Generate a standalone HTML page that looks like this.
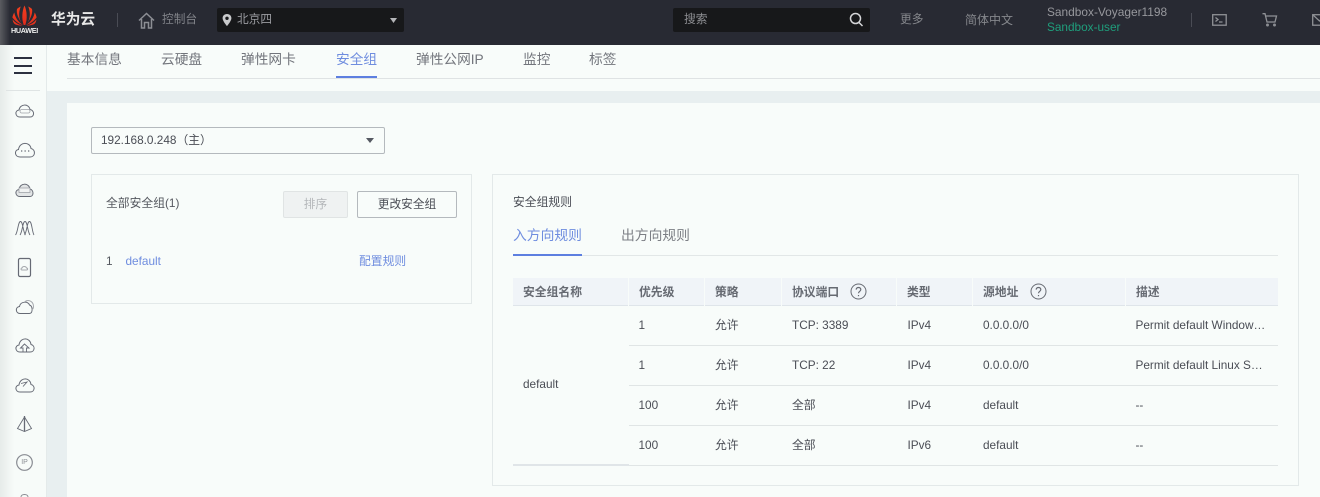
<!DOCTYPE html>
<html lang="zh"><head><meta charset="utf-8"><title>安全组</title>
<style>
html,body{margin:0;padding:0}
body{width:1320px;height:497px;overflow:hidden;position:relative;background:#f8fcfa;font-family:"Liberation Sans","Noto Sans CJK SC",sans-serif;color:#4a4d55;font-size:11.7px}
#w{position:absolute;left:0;top:0;width:1320px;height:497px;overflow:hidden;filter:blur(.3px)}
.a{position:absolute;white-space:nowrap}
.t{line-height:16px}
.l{font-size:11.8px}
.n{font-size:13.7px;line-height:18px;color:#72757c;top:51px}
svg{position:absolute;overflow:visible}
.box{position:absolute;box-sizing:border-box;border:1px solid #e3e9e9}
.th{position:absolute;top:278px;background:#f0f4f8;border-bottom:1px solid #dfe5ea;font-weight:bold;font-size:11.800px;color:#666a72;line-height:28px;padding-left:10px;box-sizing:border-box;height:28px;white-space:nowrap}
.hl{position:absolute;height:1px;background:#e0e5e5}
</style></head><body><div id="w">
<!-- top bar -->
<div class="a" style="left:0;top:0;width:1320px;height:45px;background:#282a33"></div>
<div class="a" style="left:0;top:0;width:10px;height:45px;background:linear-gradient(90deg,#5a5b60,#282a33)"></div>
<svg style="left:11px;top:5px" width="27" height="22" viewBox="0 0 27 22">
<defs><linearGradient id="r" x1="0" y1="0" x2="0" y2="1"><stop offset="0" stop-color="#f0401f"/><stop offset="1" stop-color="#e02a1c"/></linearGradient></defs>
<g fill="url(#r)">
<path d="M12.600 20C7 15 7.500 7 9.800 1.500C8.400 2 7 3 6 4C5 8 7.500 15 12.600 20Z"/>
<path d="M14.400 20C20 15 19.500 7 17.200 1.500C18.600 2 20 3 21 4C22 8 19.500 15 14.400 20Z"/>
<path d="M12.700 20C10.500 14 11 6 13.500 .5C16 6 16.500 14 14.300 20Z"/>
<path d="M12 20C7 17 4 12 3.300 7.500C2.300 9.200 1.600 11 1.400 12.500C4 16 8 19 12 20Z"/>
<path d="M15 20C20 17 23 12 23.700 7.500C24.700 9.200 25.400 11 25.600 12.500C23 16 19 19 15 20Z"/>
<path d="M11.500 20.500C7 19.500 3.500 17 1.600 14.500C1.800 16.500 2.600 18 3.600 19C6 20.300 9 20.700 11.500 20.500Z"/>
<path d="M15.500 20.500C20 19.500 23.500 17 25.400 14.500C25.200 16.500 24.400 18 23.400 19C21 20.300 18 20.700 15.500 20.500Z"/>
</g></svg>
<div class="a" style="left:11px;top:26px;width:27px;text-align:center;font-size:7.200px;line-height:9px;color:#eee;letter-spacing:-.3px;font-weight:bold">HUAWEI</div>
<div class="a t" style="left:51px;top:12px;font-size:14.700px;font-weight:bold;color:#e8e8e8">华为云</div>
<div class="a" style="left:117px;top:13px;width:1px;height:14px;background:#4a4c55"></div>
<svg style="left:138px;top:12px" width="17" height="17" viewBox="0 0 17 17" fill="none" stroke="#8c8e94" stroke-width="1.500"><path d="M1 8.500L8.500 1.500L16 8.500M3.500 7V16H6.500V10.500H10.500V16H13.500V7"/></svg>
<div class="a t" style="left:162px;top:12px;color:#82848a">控制台</div>
<div class="a" style="left:217px;top:8px;width:187px;height:24px;background:#17181a;border-radius:2px"></div>
<svg style="left:222px;top:14px" width="10" height="12" viewBox="0 0 10 12"><path fill="#c9cacc" d="M5 0C2.200 0 .6 2 .6 4.200C.6 7 5 12 5 12S9.400 7 9.400 4.200C9.400 2 7.800 0 5 0ZM5 6A1.700 1.700 0 1 1 5 2.600A1.700 1.700 0 0 1 5 6Z"/></svg>
<div class="a t" style="left:237px;top:12px;color:#9a9ba0">北京四</div>
<svg style="left:390px;top:18px" width="7" height="5"><path d="M0 0H7L3.500 5Z" fill="#b4b5b8"/></svg>
<div class="a" style="left:673px;top:8px;width:197px;height:24px;background:#17181a;border-radius:2px"></div>
<div class="a t" style="left:684px;top:12px;color:#8e8f93">搜索</div>
<svg style="left:849px;top:12px" width="15" height="15" viewBox="0 0 15 15" fill="none" stroke="#d5d6d8" stroke-width="1.500"><circle cx="6.500" cy="6.500" r="5"/><path d="M10 10.500L13.500 14"/></svg>
<div class="a t" style="left:900px;top:12px;color:#85878c">更多</div>
<div class="a t" style="left:965px;top:12px;color:#85878c;font-size:12px">简体中文</div>
<div class="a t" style="left:1047px;top:4px;color:#97989d;font-size:11.900px">Sandbox-Voyager1198</div>
<div class="a t" style="left:1047px;top:19px;color:#1f9e7c;font-size:11.800px">Sandbox-user</div>
<div class="a" style="left:1191px;top:13px;width:1px;height:14px;background:#4a4c55"></div>
<svg style="left:1212px;top:14px" width="15" height="12" viewBox="0 0 15 12" fill="none" stroke="#8f9196" stroke-width="1.300"><rect x=".7" y=".7" width="13.500" height="10.500"/><path d="M3.500 3.500L6 5.500L3.500 7.500M7 8H10.500"/></svg>
<svg style="left:1262px;top:13px" width="16" height="14" viewBox="0 0 16 14" fill="none" stroke="#8f9196" stroke-width="1.300"><path d="M.5 .7H3L5 9H13L14.500 3H3.500"/><circle cx="5.500" cy="12" r=".8"/><circle cx="12.500" cy="12" r=".8"/></svg>
<svg style="left:1312px;top:14px" width="15" height="12" viewBox="0 0 15 12" fill="none" stroke="#8f9196" stroke-width="1.300"><rect x=".7" y=".7" width="13.500" height="10.500"/><path d="M.7 .7L7.500 7L14.200 .7"/></svg>

<!-- gray layout -->
<div class="a" style="left:47px;top:91px;width:1273px;height:12px;background:#e8eff0"></div>
<div class="a" style="left:47px;top:91px;width:20px;height:406px;background:#e8eff0"></div>

<!-- sidebar -->
<div class="a" style="left:0;top:45px;width:47px;height:452px;background:linear-gradient(90deg,#e6ebe9 0,#f7fbf9 14px)"></div>
<div class="a" style="left:46px;top:45px;width:1px;height:452px;background:#e4eaea"></div>
<div class="a" style="left:14px;top:57px;width:18px;height:2px;background:#2c3040"></div>
<div class="a" style="left:14px;top:65px;width:18px;height:2px;background:#2c3040"></div>
<div class="a" style="left:14px;top:72px;width:18px;height:2px;background:#2c3040"></div>
<div class="a" style="left:6px;top:90px;width:34px;height:1px;background:#dfe4e4"></div>
<svg style="left:0;top:0" width="47" height="497" viewBox="0 0 47 497" fill="none" stroke="#666a75" stroke-width="1">
<path d="M20 117C15 117 14.500 110.500 19 110C20 103.500 29 103.500 30 109.500C34.500 110 35 117 30 117Z"/><rect x="20" y="109.500" width="10" height="3.500" rx="1.700" stroke="#a0a3a9" stroke-width=".8"/>
<path d="M20 157C14.500 157 14 150 18.500 149.500C19.500 141.500 30 141.500 31 148.500C36 149.500 35.500 157 30 157Z"/><path d="M21 151h1.300M24.500 151h1.300M28 151h1.300" stroke-width="1.300"/>
<path d="M20 196.500C15 196.500 14.500 190 19 189.500C20 182.500 29 182.500 30 189C34 190 34 196.500 30 196.500Z" fill="#e2e5e6"/><rect x="19" y="188" width="11" height="4.500" fill="#f0f2f2" stroke="#a0a3a9" stroke-width=".8"/>
<path d="M15.500 235C18 232 18 221.500 20.500 221.500C23 221.500 23 232 25.500 235M20 235C22.500 232 22.500 221.500 25 221.500C27.500 221.500 27.500 232 30 235M24.500 235C27 232 27 221.500 29.500 221.500C32 221.500 32 232 34 235" stroke-width=".9"/>
<rect x="18.500" y="258.500" width="12" height="18" rx="1.500" stroke-width="1.200"/><path d="M22 270C20.500 270 21 268 22 268C22.500 266 26 266 26.500 268C28 268 28 270 26.500 270Z" stroke="#a5a8ad"/>
<path d="M20 313.500C15.500 313.500 15 307 19.500 306.500C20.500 301 28.500 301 29.500 305C33 306 33 313.500 29.500 313.500Z"/><path d="M25 301.500C28.500 299 33.500 301.500 33.500 306.500C33.500 308 33 309 32 310" stroke="#a5a8ad"/>
<path d="M20 352C15 352 14.500 345.500 19 345C20 337 30 337 31 344.500C35.500 345.500 35 352 30 352Z"/><path d="M24.500 344L20.500 348H23V352H26.500V348H29Z" stroke-width=".9"/>
<path d="M20 392C15 392 14.500 385.500 19 385C20 377 30 377 31 384.500C35.500 385.500 35 392 30 392Z"/><path d="M21 383.500L27 382L23 386.500" stroke-width=".9"/>
<path d="M24.500 416V431" stroke-width="1.300"/><path d="M24.500 417L17.500 428.500L24.500 431.500L31.500 428.500Z" stroke-width=".9"/>
<circle cx="24.500" cy="462.500" r="7.800" stroke="#888b92" stroke-width="1.200"/>
<path d="M21 497C21 495.500 22.500 494.500 24.500 494.500C26.500 494.500 28 495.500 28 497" stroke="#888b92"/>
</svg>
<div class="a" style="left:19px;top:458px;width:11px;text-align:center;font-size:7px;line-height:9px;color:#8b8e94">IP</div>

<!-- tabs -->
<div class="a" style="left:67px;top:78px;width:1253px;height:1px;background:#dfe3e4"></div>
<div class="a" style="left:336px;top:76px;width:41px;height:2px;background:#5d7fe0"></div>
<div class="a n" style="left:67px">基本信息</div>
<div class="a n" style="left:161px">云硬盘</div>
<div class="a n" style="left:241px">弹性网卡</div>
<div class="a n" style="left:336px;color:#6f8ddf">安全组</div>
<div class="a n" style="left:416px">弹性公网IP</div>
<div class="a n" style="left:523px">监控</div>
<div class="a n" style="left:589px">标签</div>

<!-- ip select -->
<div class="a" style="left:91px;top:127px;width:294px;height:27px;box-sizing:border-box;border:1px solid #b4b9bd;border-radius:2px"></div>
<div class="a t" style="left:101px;top:132px;color:#4a4d55;font-size:11.800px">192.168.0.248（主）</div>
<svg style="left:366px;top:138px" width="8" height="5"><path d="M0 0H8L4 5Z" fill="#555962"/></svg>

<!-- left panel -->
<div class="box" style="left:91px;top:174px;width:381px;height:130px"></div>
<div class="a t" style="left:106px;top:195px;color:#55585f;font-size:11.800px">全部安全组(1)</div>
<div class="a" style="left:283px;top:191px;width:65px;height:27px;box-sizing:border-box;background:#eff2f2;border:1px solid #e0e4e4;border-radius:2px;text-align:center;line-height:25px;color:#b3b6b9">排序</div>
<div class="a" style="left:357px;top:191px;width:100px;height:27px;box-sizing:border-box;border:1px solid #b4b9bd;border-radius:2px;text-align:center;line-height:25px;color:#4a4d55">更改安全组</div>
<div class="a t l" style="left:106px;top:253px;color:#55585f">1</div>
<div class="a t l" style="left:125.500px;top:253px;color:#6f8ddf">default</div>
<div class="a t l" style="left:359px;top:253px;color:#6f8ddf">配置规则</div>

<!-- right panel -->
<div class="box" style="left:492px;top:174px;width:807px;height:312px"></div>
<div class="a t l" style="left:513px;top:194px;color:#4a4d55">安全组规则</div>
<div class="a n" style="left:513px;top:227px;font-size:13.800px;color:#6f8ddf">入方向规则</div>
<div class="a n" style="left:621px;top:227px;font-size:13.800px;color:#7c7f85">出方向规则</div>
<div class="a" style="left:513px;top:255px;width:765px;height:1px;background:#e2e7e7"></div>
<div class="a" style="left:513px;top:254px;width:69px;height:2px;background:#5d7fe0"></div>

<!-- table head -->
<div class="th" style="left:513px;width:115px">安全组名称</div>
<div class="th" style="left:629px;width:75px">优先级</div>
<div class="th" style="left:705px;width:76px">策略</div>
<div class="th" style="left:782px;width:114px">协议端口</div>
<div class="th" style="left:897px;width:75px">类型</div>
<div class="th" style="left:973px;width:152px">源地址</div>
<div class="th" style="left:1126px;width:152px">描述</div>
<svg style="left:850px;top:283px" width="17" height="17" viewBox="0 0 17 17" fill="none" stroke="#666a72" stroke-width="1"><circle cx="8.500" cy="8.500" r="7.500"/><path d="M6.200 6.600C6.200 3.800 10.800 3.800 10.800 6.600C10.800 8.300 8.500 8.300 8.500 10.300" stroke-width="1.200"/><path d="M8.500 12V13.200" stroke-width="1.200"/></svg>
<svg style="left:1030px;top:283px" width="17" height="17" viewBox="0 0 17 17" fill="none" stroke="#666a72" stroke-width="1"><circle cx="8.500" cy="8.500" r="7.500"/><path d="M6.200 6.600C6.200 3.800 10.800 3.800 10.800 6.600C10.800 8.300 8.500 8.300 8.500 10.300" stroke-width="1.200"/><path d="M8.500 12V13.200" stroke-width="1.200"/></svg>

<!-- table rows -->
<div class="hl" style="left:629px;top:345px;width:649px"></div>
<div class="hl" style="left:629px;top:385px;width:649px"></div>
<div class="hl" style="left:629px;top:425px;width:649px"></div>
<div class="hl" style="left:629px;top:465px;width:649px"></div>
<div class="a" style="left:513px;top:464px;width:116px;height:2px;background:#e0e5e8"></div>
<div class="a t l" style="left:523px;top:376px">default</div>

<div class="a t l" style="left:638.500px;top:317px">1</div>
<div class="a t l" style="left:715px;top:317px">允许</div>
<div class="a t l" style="left:792px;top:317px">TCP: 3389</div>
<div class="a t l" style="left:907.500px;top:317px">IPv4</div>
<div class="a t l" style="left:983px;top:317px">0.0.0.0/0</div>
<div class="a t l" style="left:1135.500px;top:317px">Permit default Window…</div>

<div class="a t l" style="left:638.500px;top:357px">1</div>
<div class="a t l" style="left:715px;top:357px">允许</div>
<div class="a t l" style="left:792px;top:357px">TCP: 22</div>
<div class="a t l" style="left:907.500px;top:357px">IPv4</div>
<div class="a t l" style="left:983px;top:357px">0.0.0.0/0</div>
<div class="a t l" style="left:1135.500px;top:357px">Permit default Linux S…</div>

<div class="a t l" style="left:638.500px;top:397px">100</div>
<div class="a t l" style="left:715px;top:397px">允许</div>
<div class="a t l" style="left:792px;top:397px">全部</div>
<div class="a t l" style="left:907.500px;top:397px">IPv4</div>
<div class="a t l" style="left:983px;top:397px">default</div>
<div class="a t l" style="left:1135.500px;top:397px">--</div>

<div class="a t l" style="left:638.500px;top:437px">100</div>
<div class="a t l" style="left:715px;top:437px">允许</div>
<div class="a t l" style="left:792px;top:437px">全部</div>
<div class="a t l" style="left:907.500px;top:437px">IPv6</div>
<div class="a t l" style="left:983px;top:437px">default</div>
<div class="a t l" style="left:1135.500px;top:437px">--</div>
</div></body></html>
